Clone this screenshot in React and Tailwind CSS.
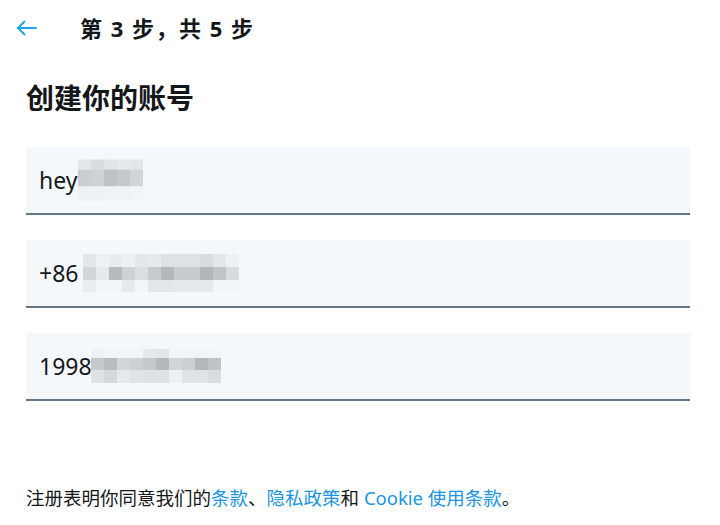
const FONT = { fontFamily: '"Noto Sans", "Noto Sans CJK SC", sans-serif' };

// pixelated placeholders covering the redacted input text
const MOSAICS = [
  {
    left: 78,
    rows: [
      { h: 10, cells: ["#e4e7ea", "#dadde0", "#e1e4e7", "#e6e9ec", "#e3e6e9"] },
      { h: 17, cells: ["#cbced1", "#cfd2d5", "#bfc2c5", "#c6c9cc", "#d2d5d8"] },
      { h: 14, cells: ["#eef1f3", "#eef1f3", "#f0f3f5", "#f0f3f5", "#f2f5f7"] },
    ],
  },
  {
    left: 83,
    rows: [
      { h: 13, cells: ["#e3e6e9", "#eef1f3", "#e9ecee", "#eef1f3", "#e4e7ea", "#e7eaed", "#dfe2e5", "#dfe2e5", "#dfe2e5", "#dadde0", "#e4e7ea", "#eef1f3"] },
      { h: 13, cells: ["#d3d6d9", "#e6e9ec", "#b8bbbe", "#cfd2d5", "#dbdee1", "#c8cbce", "#b5b8bb", "#c8cbce", "#c8cbce", "#b3b6b9", "#c2c5c8", "#d9dcdf"] },
      { h: 12, cells: ["#eaedf0", "#f2f5f7", "#f2f5f7", "#e6e9ec", "#f2f5f7", "#e3e6e9", "#e3e6e9", "#e6e9ec", "#e6e9ec", "#e6e9ec", "#f2f5f7", "#f2f5f7"] },
    ],
  },
  {
    left: 91,
    rows: [
      { h: 9, cells: ["#eef1f3", "#f2f5f7", "#f2f5f7", "#f2f5f7", "#e6e9ec", "#e3e6e9", "#f2f5f7", "#f2f5f7", "#f2f5f7", "#f2f5f7"] },
      { h: 12, cells: ["#c6c9cc", "#b9bcbf", "#d3d6d9", "#cdd0d3", "#c6c9cc", "#b5b8bb", "#d3d6d9", "#cdd0d3", "#b5b8bb", "#c0c3c6"] },
      { h: 13, cells: ["#dfe2e5", "#d6d9dc", "#e6e9ec", "#e1e4e7", "#dfe2e5", "#dfe2e5", "#eef1f3", "#e1e4e7", "#e1e4e7", "#dadde0"] },
    ],
  },
];

function Mosaic({ rows }) {
  return (
    <div className="flex flex-col">
      {rows.map((row, i) => (
        <div key={i} className="flex" style={{ height: row.h }}>
          {row.cells.map((c, j) => (
            <div key={j} className="w-[13px]" style={{ background: c }} />
          ))}
        </div>
      ))}
    </div>
  );
}

function Field({ value, mosaic }) {
  return (
    <div className="relative h-[68px] bg-[#f5f8fa] border-b-2 border-[#657786] flex items-center pl-[13px]">
      <span className="text-[23px] text-[#14171a] leading-none">{value}</span>
      <div className="absolute top-1/2 -translate-y-1/2" style={{ left: mosaic.left - 26 }}>
        <Mosaic rows={mosaic.rows} />
      </div>
    </div>
  );
}

export default function App() {
  return (
    <div className="w-[720px] h-[525px] bg-white overflow-hidden" style={FONT}>
      {/* Header */}
      <div className="h-14 flex items-center">
        <button type="button" className="ml-[16px] w-[22px] h-[22px] flex items-center justify-center text-[#1da1f2]">
          <svg viewBox="0 0 22 16" className="w-[22px] h-4" fill="none" stroke="currentColor" strokeWidth="1.8" strokeLinecap="round" strokeLinejoin="round">
            <path d="M2 8h18" />
            <path d="M8.5 1.5L2 8l6.5 6.5" />
          </svg>
        </button>
        <h2 className="ml-[42px] text-[22px] tracking-[1.5px] font-bold text-[#14171a]">第 3 步，共 5 步</h2>
      </div>

      <div className="px-[26px] pr-[30px]">
        <h1 className="mt-[24px] text-[28px] leading-9 font-bold text-[#14171a]">创建你的账号</h1>

        <div className="mt-[31px] flex flex-col gap-[25px]">
          <Field value="hey" mosaic={MOSAICS[0]} />
          <Field value="+86" mosaic={MOSAICS[1]} />
          <Field value="1998" mosaic={MOSAICS[2]} />
        </div>

        <p className="mt-[84px] text-[18.5px] leading-[26px] text-[#14171a]">
          注册表明你同意我们的<span className="text-[#1b95e0]">条款</span>、<span className="text-[#1b95e0]">隐私政策</span>和 <span className="text-[#1b95e0]">Cookie 使用条款</span>。
        </p>
      </div>
    </div>
  );
}
